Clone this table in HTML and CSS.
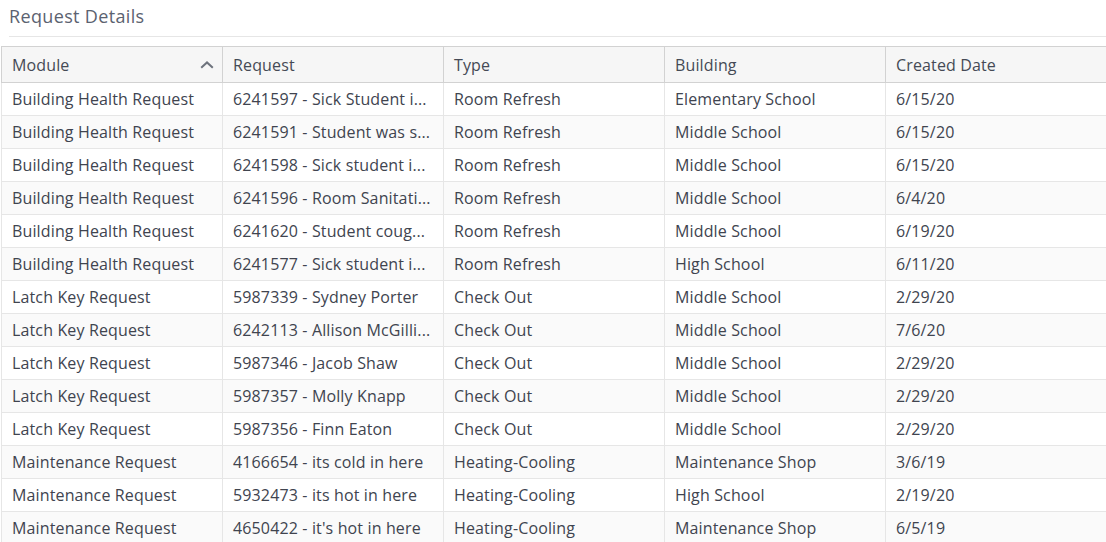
FILE: index.html
```html
<!DOCTYPE html>
<html>
<head>
<meta charset="utf-8">
<link rel="stylesheet" href="styles.css">
</head>
<body>
<div class="panel">
  <div class="title">Request Details</div>
  <div class="grid-wrap">
    <table class="grid">
      <thead>
        <tr>
          <th><div class="th-inner"><span>Module</span><svg class="sort" width="14" height="8" viewBox="0 0 14 8"><path d="M1.2 6.8 L7 1.4 L12.8 6.8" fill="none" stroke="#6e737d" stroke-width="2"/></svg></div></th>
          <th>Request</th>
          <th>Type</th>
          <th>Building</th>
          <th>Created Date</th>
        </tr>
      </thead>
      <tbody>
        <tr><td>Building Health Request</td><td>6241597 - Sick Student i...</td><td>Room Refresh</td><td>Elementary School</td><td>6/15/20</td></tr>
        <tr><td>Building Health Request</td><td>6241591 - Student was s...</td><td>Room Refresh</td><td>Middle School</td><td>6/15/20</td></tr>
        <tr><td>Building Health Request</td><td>6241598 - Sick student i...</td><td>Room Refresh</td><td>Middle School</td><td>6/15/20</td></tr>
        <tr><td>Building Health Request</td><td>6241596 - Room Sanitati...</td><td>Room Refresh</td><td>Middle School</td><td>6/4/20</td></tr>
        <tr><td>Building Health Request</td><td>6241620 - Student coug...</td><td>Room Refresh</td><td>Middle School</td><td>6/19/20</td></tr>
        <tr><td>Building Health Request</td><td>6241577 - Sick student i...</td><td>Room Refresh</td><td>High School</td><td>6/11/20</td></tr>
        <tr><td>Latch Key Request</td><td>5987339 - Sydney Porter</td><td>Check Out</td><td>Middle School</td><td>2/29/20</td></tr>
        <tr><td>Latch Key Request</td><td>6242113 - Allison McGilli...</td><td>Check Out</td><td>Middle School</td><td>7/6/20</td></tr>
        <tr><td>Latch Key Request</td><td>5987346 - Jacob Shaw</td><td>Check Out</td><td>Middle School</td><td>2/29/20</td></tr>
        <tr><td>Latch Key Request</td><td>5987357 - Molly Knapp</td><td>Check Out</td><td>Middle School</td><td>2/29/20</td></tr>
        <tr><td>Latch Key Request</td><td>5987356 - Finn Eaton</td><td>Check Out</td><td>Middle School</td><td>2/29/20</td></tr>
        <tr><td>Maintenance Request</td><td>4166654 - its cold in here</td><td>Heating-Cooling</td><td>Maintenance Shop</td><td>3/6/19</td></tr>
        <tr><td>Maintenance Request</td><td>5932473 - its hot in here</td><td>Heating-Cooling</td><td>High School</td><td>2/19/20</td></tr>
        <tr><td>Maintenance Request</td><td>4650422 - it's hot in here</td><td>Heating-Cooling</td><td>Maintenance Shop</td><td>6/5/19</td></tr>
      </tbody>
    </table>
  </div>
</div>
</body>
</html>
```

FILE: styles.css
```css
html, body {
  margin: 0;
  padding: 0;
  background: #ffffff;
  overflow: hidden;
}
body {
  font-family: "Open Sans", "Liberation Sans", sans-serif;
  color: #40444f;
}
.panel {
  width: 1106px;
  height: 542px;
  overflow: hidden;
}
.title {
  margin-left: 9px;
  height: 37px;
  box-sizing: border-box;
  padding-top: 3px;
  font-size: 18px;
  letter-spacing: 0.35px;
  line-height: 26px;
  color: #5b6270;
  border-bottom: 1px solid #e6e6e6;
}
.grid-wrap {
  margin-top: 9px;
  margin-left: 1px;
  width: 1110px;
}
.grid {
  border-collapse: collapse;
  table-layout: fixed;
  width: 1105px;
  font-size: 16px;
  letter-spacing: 0.14px;
}
.grid th, .grid td {
  width: 221px;
  box-sizing: border-box;
  text-align: left;
  font-weight: 400;
  padding: 0 10px;
  white-space: nowrap;
  overflow: hidden;
}
.grid th {
  height: 36px;
  background: #f6f6f6;
  border: 1px solid #d2d2d2;
  color: #454a55;
}
.grid td {
  height: 33px;
  border: 1px solid #e6e6e6;
  border-top: 0;
}
.grid tbody tr:nth-child(even) td {
  background: #fafafa;
}
.th-inner {
  display: flex;
  align-items: center;
  justify-content: space-between;
}
.sort {
  margin-right: -2px;
  margin-top: 1px;
}
```
